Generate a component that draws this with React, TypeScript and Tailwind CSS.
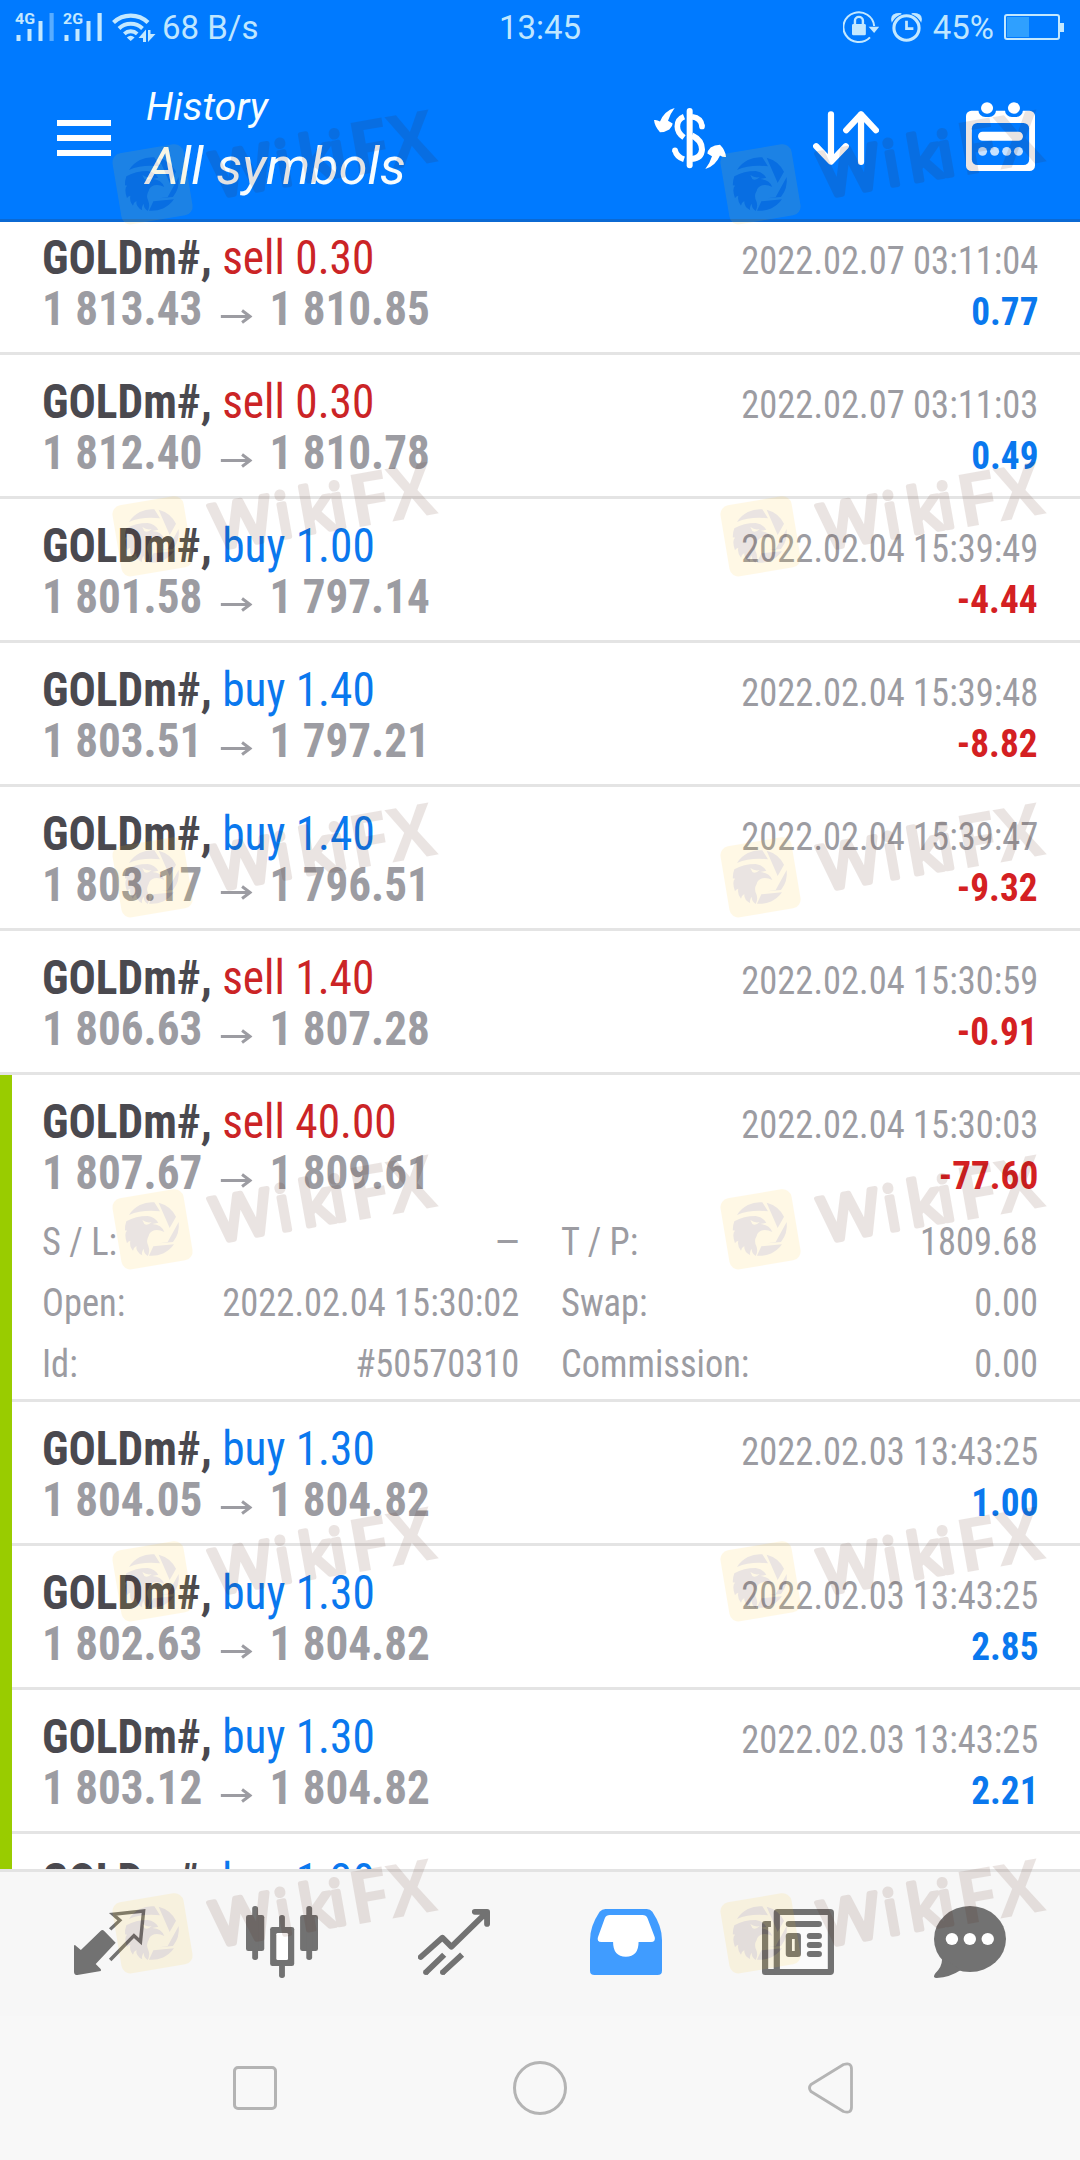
import { Fragment } from "react";

type Deal = {
  side: "sell" | "buy";
  volume: string;
  open: string;
  close: string;
  time: string;
  profit: string;
};

const DEALS: Deal[] = [
  { side: "sell", volume: "0.30", open: "1 813.43", close: "1 810.85", time: "2022.02.07 03:11:04", profit: "0.77" },
  { side: "sell", volume: "0.30", open: "1 812.40", close: "1 810.78", time: "2022.02.07 03:11:03", profit: "0.49" },
  { side: "buy", volume: "1.00", open: "1 801.58", close: "1 797.14", time: "2022.02.04 15:39:49", profit: "-4.44" },
  { side: "buy", volume: "1.40", open: "1 803.51", close: "1 797.21", time: "2022.02.04 15:39:48", profit: "-8.82" },
  { side: "buy", volume: "1.40", open: "1 803.17", close: "1 796.51", time: "2022.02.04 15:39:47", profit: "-9.32" },
  { side: "sell", volume: "1.40", open: "1 806.63", close: "1 807.28", time: "2022.02.04 15:30:59", profit: "-0.91" },
];

const EXPANDED: Deal = {
  side: "sell",
  volume: "40.00",
  open: "1 807.67",
  close: "1 809.61",
  time: "2022.02.04 15:30:03",
  profit: "-77.60",
};

const MARKED: Deal[] = [
  { side: "buy", volume: "1.30", open: "1 804.05", close: "1 804.82", time: "2022.02.03 13:43:25", profit: "1.00" },
  { side: "buy", volume: "1.30", open: "1 802.63", close: "1 804.82", time: "2022.02.03 13:43:25", profit: "2.85" },
  { side: "buy", volume: "1.30", open: "1 803.12", close: "1 804.82", time: "2022.02.03 13:43:25", profit: "2.21" },
  { side: "buy", volume: "1.30", open: "1 803.12", close: "1 804.82", time: "2022.02.03 13:43:25", profit: "2.21" },
];

const DETAILS = [
  ["S / L:", "—", "T / P:", "1809.68"],
  ["Open:", "2022.02.04 15:30:02", "Swap:", "0.00"],
  ["Id:", "#50570310", "Commission:", "0.00"],
];

const WATERMARK_ROWS = [104, 456, 797, 1149, 1501, 1853];
const WATERMARK_COLUMNS = [109, 717];

function Signal({ label, weak }: { label: string; weak?: boolean }) {
  return (
    <svg className="overflow-visible" width="40" height="29" viewBox="0 0 40 29" fill="#c3e8ff">
      <text x="0" y="11" fontSize="15.5" fontWeight="700" fontFamily="Roboto" textLength="20" lengthAdjust="spacingAndGlyphs">
        {label}
      </text>
      <rect x="1.5" y="22" width="4" height="6" />
      <rect x="12.5" y="16" width="4" height="12" />
      <rect x="23.5" y="8" width="4" height="20" />
      <rect x="34.5" y="0" width="4.2" height="28" opacity={weak ? 0.45 : 1} />
    </svg>
  );
}

function StatusBar() {
  return (
    <div className="grid h-[56px] grid-cols-[1fr_auto_1fr] text-[33px] leading-[56px] text-[#bfe6ff]">
      <div className="flex pl-[15px]">
        <div className="flex gap-2 pt-[13px]">
          <Signal label="4G" weak />
          <Signal label="2G" />
        </div>
        <svg className="mt-[13px] ml-[9px]" width="44" height="30" viewBox="0 0 44 30" fill="none" stroke="#c3e8ff">
          <path d="M1.5 9.5A25 25 0 0 1 36 9.5" strokeWidth="4.2" />
          <path d="M7 15.5A17 17 0 0 1 30.5 15.5" strokeWidth="4" />
          <path d="M12.3 20.8A9.5 9.5 0 0 1 25.2 20.8" strokeWidth="3.8" />
          <path d="M14.8 24.5Q18.7 21 22.6 24.5L18.7 28Z" fill="#c3e8ff" stroke="none" />
          <path d="M26.5 25L34 16.5V29H31V25Z" fill="#c3e8ff" stroke="none" />
          <path d="M36 29V17H38.5V21H43.5Z" fill="#c3e8ff" stroke="none" />
        </svg>
        <span className="ml-[6px]">68 B/s</span>
      </div>
      <span>13:45</span>
      <div className="flex justify-end pr-4">
        <svg className="mt-[11px]" width="36" height="32" viewBox="874 33 104 96" preserveAspectRatio="none" fill="none" stroke="#c3e8ff">
          <path d="M952 112A44.500 44.500 0 1 1 964 78" strokeWidth="6" />
          <path d="M948 80H979L964 99Z" fill="#c3e8ff" stroke="none" />
          <rect x="900" y="72" width="40" height="34" rx="4" fill="#c3e8ff" stroke="none" />
          <path d="M908.500 74V62A11.500 11.500 0 0 1 931.500 62V74" strokeWidth="7" />
        </svg>
        <svg className="mt-[13px] ml-3" width="31" height="29" viewBox="1013 39 90 87" preserveAspectRatio="none" fill="none" stroke="#c3e8ff">
          <circle cx="1058" cy="84" r="36.500" strokeWidth="9" />
          <path d="M1058 62V86H1078" strokeWidth="8" />
          <path d="M1016 64Q1010 38 1043 41Q1025 47 1016 64Z" fill="#c3e8ff" stroke="#c3e8ff" strokeWidth="3" />
          <path d="M1100 64Q1106 38 1073 41Q1091 47 1100 64Z" fill="#c3e8ff" stroke="#c3e8ff" strokeWidth="3" />
        </svg>
        <span className="ml-[11px]">45%</span>
        <div className="mt-[14px] ml-[10px] flex h-[26px] items-center">
          <div className="h-[26px] w-14 rounded-[3px] border-2 border-[#c3e8ff] p-px">
            <div className="h-full w-[22px] bg-[#2fa0ff]" />
          </div>
          <div className="h-[9px] w-[4px] bg-[#c3e8ff]" />
        </div>
      </div>
    </div>
  );
}

function DollarIcon() {
  const arrow = "M104 54Q90 72 84 92L98 100Q98 108 88 118Q76 126 60 126Q44 110 42 90Q50 88 60 94Q74 62 104 54Z";
  return (
    <svg className="mt-[52px]" width="72" height="61" viewBox="42 54 216 182" preserveAspectRatio="none" fill="none" stroke="#fff">
      <rect x="140" y="54" width="18" height="180" rx="9" fill="#fff" stroke="none" />
      <path d="M132 80Q112 88 112 109Q112 128 132 142" strokeWidth="17" />
      <path d="M105 180Q110 200 132 207" strokeWidth="17" />
      <circle cx="105" cy="180" r="8.500" fill="#fff" stroke="none" />
      <path d="M156 80Q184 84 186 108" strokeWidth="17" />
      <circle cx="186" cy="109" r="8.500" fill="#fff" stroke="none" />
      <path d="M156 136Q186 150 186 178Q184 204 156 206" strokeWidth="18" />
      <path d={arrow} fill="#fff" stroke="none" />
      <path d={arrow} fill="#fff" stroke="none" transform="rotate(180 150 145)" />
    </svg>
  );
}

function SortIcon() {
  return (
    <svg
      className="mt-[55px]"
      width="66"
      height="54"
      viewBox="793 332 191 163"
      preserveAspectRatio="none"
      fill="none"
      stroke="#fff"
      strokeWidth="18"
      strokeLinecap="round"
      strokeLinejoin="round"
    >
      <path d="M845 342V484M802 438L845 485L888 438" />
      <path d="M932 486V342M889 390L932 342L975 390" />
    </svg>
  );
}

function CalendarIcon() {
  return (
    <svg className="mt-[46px]" width="69" height="69" viewBox="1237 306 200 207" preserveAspectRatio="none" fill="#fff">
      <rect x="1237" y="332" width="200" height="181" rx="16" />
      <rect x="1254" y="369" width="166" height="126" rx="16" fill="#007aff" />
      <rect x="1273" y="306" width="51" height="45" rx="20" fill="#007aff" />
      <rect x="1350" y="306" width="52" height="45" rx="20" fill="#007aff" />
      <circle cx="1298" cy="324" r="17.500" />
      <circle cx="1376" cy="324" r="17.500" />
      <rect x="1272" y="395" width="130" height="27" rx="13" />
      <g fill="#c7e2ff">
        <circle cx="1285" cy="454" r="13" />
        <circle cx="1320" cy="454" r="13" />
        <circle cx="1355" cy="454" r="13" />
        <circle cx="1389" cy="454" r="13" />
      </g>
    </svg>
  );
}

function Header() {
  return (
    <header className="h-[222px] border-b-[3px] border-[#0b69d3] bg-[#007aff]">
      <StatusBar />
      <div className="flex items-start pr-[45px] pl-[57px] text-[#f7fdff]">
        <div className="mt-16 flex w-[54px] flex-col gap-[9px]">
          <div className="h-1.5 bg-white" />
          <div className="h-1.5 bg-white" />
          <div className="h-1.5 bg-white" />
        </div>
        <div className="ml-[35px] pt-[22px] italic">
          <div className="text-[39.500px] leading-[57px]">History</div>
          <div className="text-[52px] leading-[64px]">All symbols</div>
        </div>
        <div className="ml-auto flex items-start gap-[87px]">
          <DollarIcon />
          <SortIcon />
          <CalendarIcon />
        </div>
      </div>
    </header>
  );
}

function DealLines({ deal }: { deal: Deal }) {
  return (
    <div className="pt-[21px] leading-[51px]">
      <div className="flex h-[51px] items-baseline justify-between">
        <div className="origin-left scale-x-[0.944] text-[48px]">
          <span className="font-bold text-[#4a494f]">GOLDm#,</span>{" "}
          <span className={deal.side === "sell" ? "text-[#cb2426]" : "text-[#0a78ee]"}>
            {deal.side} {deal.volume}
          </span>
        </div>
        <div className="origin-right scale-x-[0.936] text-[39px] text-[#9c9ca2]">{deal.time}</div>
      </div>
      <div className="flex h-[51px] items-baseline justify-between font-bold">
        <div className="flex origin-left scale-x-[0.94] items-baseline text-[48px] text-[#9c9ca2]">
          <span className="w-[190px]">{deal.open}</span>
          <svg className="mr-[18px]" width="34" height="17" viewBox="0 0 32 17" preserveAspectRatio="none" fill="none" stroke="currentColor">
            <path d="M0 8.500H29" strokeWidth="3" />
            <path d="M21.500 2.500L29.500 8.500L21.500 14.500" strokeWidth="3" />
          </svg>
          <span>{deal.close}</span>
        </div>
        <div
          className={
            deal.profit.startsWith("-")
              ? "origin-right scale-x-[0.955] text-[39px] text-[#d42022]"
              : "origin-right scale-x-[0.955] text-[39px] text-[#0a78ee]"
          }
        >
          {deal.profit}
        </div>
      </div>
    </div>
  );
}

function DealRow({ deal }: { deal: Deal }) {
  return (
    <div className="h-36 shrink-0 border-b-[3px] border-[#e4e4e4] px-[42px]">
      <DealLines deal={deal} />
    </div>
  );
}

function ExpandedRow() {
  return (
    <div className="h-[327px] shrink-0 border-b-[3px] border-[#e4e4e4] pr-[42px] pl-[30px]">
      <DealLines deal={EXPANDED} />
      <div className="mt-[14px] grid grid-cols-2 gap-x-[42px] text-[39px] leading-[61px] text-[#9c9ca2]">
        {DETAILS.map(([a, aValue, b, bValue]) => (
          <Fragment key={a}>
            <div className="flex justify-between">
              <span className="origin-left scale-x-[0.935]">{a}</span>
              <span className="origin-right scale-x-[0.936]">{aValue}</span>
            </div>
            <div className="flex justify-between">
              <span className="origin-left scale-x-[0.935]">{b}</span>
              <span className="origin-right scale-x-[0.936]">{bValue}</span>
            </div>
          </Fragment>
        ))}
      </div>
    </div>
  );
}

function History() {
  return (
    <main className="h-[1647px] overflow-hidden bg-white font-['Roboto_Condensed',Roboto,sans-serif]">
      <div className="-mt-[11px]">
        {DEALS.map((deal) => (
          <DealRow key={deal.time} deal={deal} />
        ))}
      </div>
      <div className="border-l-[12px] border-[#99cc00]">
        <ExpandedRow />
        {MARKED.map((deal, i) => (
          <div key={i} className="h-36 border-b-[3px] border-[#e4e4e4] pr-[42px] pl-[30px]">
            <DealLines deal={deal} />
          </div>
        ))}
      </div>
    </main>
  );
}

function TabBar() {
  return (
    <nav className="flex h-[147px] gap-[100px] border-t-[3px] border-[#e3e3e3] bg-[#f7f7f7] pt-[34px] pl-[74px] text-[#727272]">
      <svg width="72" height="72" viewBox="215 258 209 216" preserveAspectRatio="none" fill="currentColor">
        <path d="M215 377Q217 373 221 378L235 390L292 333Q297 328 302 332L336 368L278 432L293 448V453L225 465Q215 465 215 455Z" />
        <path d="M320 328L348 301L328 283L417 273L408 365L389 347L320 420" fill="none" stroke="currentColor" strokeWidth="10" />
      </svg>
      <svg width="72" height="72" viewBox="714 258 209 216" preserveAspectRatio="none" fill="currentColor">
        <rect x="714" y="285" width="53" height="108" rx="7" />
        <rect x="732" y="258" width="17" height="162" rx="8" />
        <rect x="871" y="285" width="52" height="108" rx="7" />
        <rect x="889" y="258" width="17" height="162" rx="8" />
        <rect x="810" y="285" width="17" height="189" rx="8" />
        <rect x="784" y="321" width="70" height="117" rx="7" />
        <rect x="802" y="339" width="34" height="81" rx="4" fill="#fff" />
      </svg>
      <svg
        width="72"
        height="72"
        viewBox="1214 258 209 216"
        preserveAspectRatio="none"
        fill="none"
        stroke="currentColor"
        strokeWidth="17"
        strokeLinejoin="round"
      >
        <path d="M1222 411L1285 353L1311 380L1412 278M1379 275.500H1414.500V312" strokeLinecap="round" />
        <path d="M1235 459L1290 404M1284 459L1342 404" />
        <circle cx="1237" cy="457" r="8" fill="currentColor" stroke="none" />
        <circle cx="1286" cy="457" r="8" fill="currentColor" stroke="none" />
      </svg>
      <svg width="72" height="72" viewBox="145 258 209 216" preserveAspectRatio="none">
        <path
          d="M190 267H310Q320 267 326 275Q354 318 354 360V452Q354 465 341 465H158Q145 465 145 452V360Q145 318 173 275Q180 267 190 267Z"
          fill="#409cff"
        />
        <path
          d="M203 285H297Q308 285 312 295L333 352Q336 366 322 366H286Q286 410 249 410Q212 410 212 366H178Q164 366 168 352L188 295Q192 285 203 285Z"
          fill="#fff"
        />
      </svg>
      <svg width="72" height="72" viewBox="645 258 209 216" preserveAspectRatio="none" fill="none" stroke="currentColor">
        <path d="M671 312H654V456H690" strokeWidth="18" strokeLinejoin="round" />
        <rect x="688" y="276" width="157" height="180" rx="2" strokeWidth="18" strokeLinejoin="round" fill="#fbfbfb" />
        <g fill="currentColor" stroke="none">
          <rect x="714" y="303" width="105" height="18" rx="9" />
          <rect x="714" y="339" width="44" height="72" rx="9" />
          <rect x="775" y="339" width="44" height="18" rx="9" />
          <rect x="775" y="366" width="44" height="18" rx="9" />
          <rect x="775" y="393" width="44" height="18" rx="9" />
          <rect x="732" y="357" width="8" height="36" fill="#fbfbfb" />
        </g>
      </svg>
      <svg width="72" height="72" viewBox="1144 258 209 216" preserveAspectRatio="none" fill="currentColor">
        <ellipse cx="1248.500" cy="357" rx="104.500" ry="99" />
        <path d="M1166 410Q1172 435 1148 460Q1138 474 1152 474Q1190 472 1222 450Z" />
        <g fill="#fff">
          <circle cx="1196" cy="357" r="18" />
          <circle cx="1248" cy="357" r="18" />
          <circle cx="1300" cy="357" r="18" />
        </g>
      </svg>
    </nav>
  );
}

function SystemNav() {
  return (
    <div className="flex h-36 items-start bg-[#f8f8f8]">
      <div className="mt-[50px] ml-[233px] h-11 w-11 rounded-[5px] border-[3px] border-[#b4b4b4]" />
      <div className="mt-[45px] ml-[236px] h-[54px] w-[54px] rounded-full border-[3px] border-[#b4b4b4]" />
      <svg className="mt-[46px] ml-[241px]" width="45" height="52" viewBox="0 0 45 52" fill="none" stroke="#b4b4b4" strokeWidth="2.800">
        <path d="M3 22.500L35.500 2.500Q43.500 0 43.500 7V45Q43.500 52 35.500 49.500L3 29.500Q0 26 3 22.500Z" strokeLinejoin="round" />
      </svg>
    </div>
  );
}

function Watermark({ x, y }: { x: number; y: number }) {
  return (
    <svg className="absolute" style={{ left: x, top: y }} width="340" height="126" viewBox="0 0 340 126" opacity="0.108">
      <rect x="7.500" y="44.300" width="72" height="72" rx="9" fill="#ffc81e" transform="rotate(-9.500 43.500 80.300)" />
      <g transform="translate(-4 31) scale(0.33333)" fill="#4b1400">
        <path d="M72 105A81 81 0 0 1 148 67L165 94Q112 88 72 105Z" />
        <path d="M161 68A81 81 0 0 1 213 110L194 144Z" />
        <path d="M221 126A81 81 0 0 1 204 186L163 190L188 186Z" />
        <path d="M207 193L145 199L132 227A81 81 0 0 0 207 193Z" />
        <path d="M64 124Q92 108 128 108Q150 111 160 128L142 132Q170 134 178 156Q162 148 148 151Q133 156 131 168Q122 182 130 198Q136 214 128 228Q116 220 116 206Q108 218 112 226Q92 216 94 198Q84 204 84 212Q72 198 76 182Q68 184 66 190Q56 160 66 152Q60 148 60 154Q58 140 64 124Z" />
        <path d="M112 120Q126 130 140 126Q128 138 118 132Z" fill="#ffc81e" />
      </g>
      <g transform="translate(104 96) rotate(-10)" fill="#4b1400" fontFamily="Open Sans, sans-serif">
        <g fontSize="62" fontWeight="500" stroke="#4b1400" strokeWidth="5" strokeLinejoin="round">
          <text x="3" y="-2" textLength="61" lengthAdjust="spacingAndGlyphs">
            W
          </text>
          <text x="68" y="-2">
            i
          </text>
          <text x="92" y="-2" textLength="34" lengthAdjust="spacingAndGlyphs">
            k
          </text>
          <text x="123" y="-2">
            i
          </text>
        </g>
        <g fontSize="74" fontWeight="700">
          <text x="142" y="1" textLength="42" lengthAdjust="spacingAndGlyphs">
            F
          </text>
          <text x="182" y="1" textLength="47" lengthAdjust="spacingAndGlyphs">
            X
          </text>
        </g>
      </g>
    </svg>
  );
}

export default function App() {
  return (
    <div className="relative h-[2160px] w-[1080px] overflow-hidden font-[Roboto,sans-serif]">
      <Header />
      <History />
      <TabBar />
      <SystemNav />
      <div className="pointer-events-none absolute inset-0">
        {WATERMARK_ROWS.map((y) => WATERMARK_COLUMNS.map((x) => <Watermark key={`${x}-${y}`} x={x} y={y} />))}
      </div>
    </div>
  );
}
